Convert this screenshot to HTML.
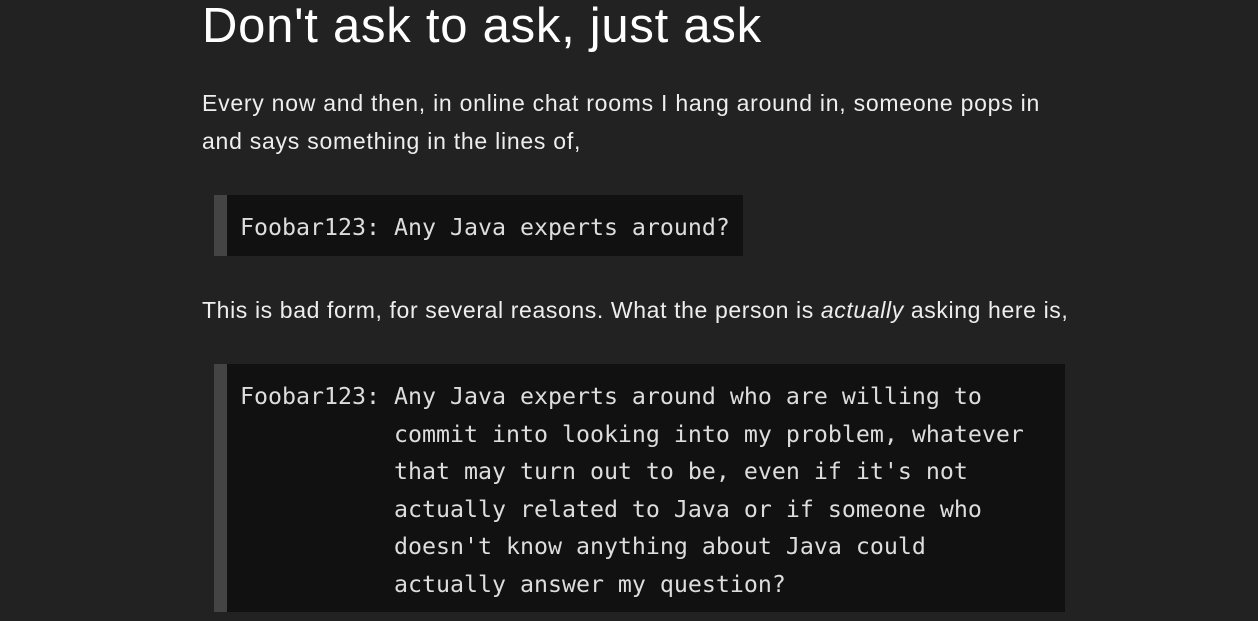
<!DOCTYPE html>
<html><head><style>
html,body{margin:0;padding:0;background:#222;width:1258px;height:621px;overflow:hidden}
body{color:#eee;font-family:"Liberation Sans",sans-serif}
h1{position:absolute;left:202px;top:-4px;margin:0;font-weight:normal;font-size:49px;line-height:60px;color:#fff;white-space:nowrap;letter-spacing:0.75px}
p{position:absolute;left:202px;margin:0;font-size:23px;line-height:38px;white-space:nowrap;color:#eee;letter-spacing:0.75px}
pre{position:absolute;margin:0;background:#111;border-left:13px solid #444;color:#ddd;font-family:"DejaVu Sans Mono","Liberation Mono",monospace;font-size:23.25px;line-height:37.6px;padding:0 10px 0 13px;box-sizing:border-box}
</style></head><body>
<h1>Don't ask to ask, just ask</h1>
<p style="top:84px">Every now and then, in online chat rooms I hang around in, someone pops in<br>and says something in the lines of,</p>
<pre style="left:214px;top:195px;width:529px;height:61px;padding-top:14px">Foobar123: Any Java experts around?</pre>
<p style="top:291px;letter-spacing:0.62px">This is bad form, for several reasons. What the person is <i>actually</i> asking here is,</p>
<pre style="left:214px;top:364px;width:851px;height:248px;padding-top:14px">Foobar123: Any Java experts around who are willing to
           commit into looking into my problem, whatever
           that may turn out to be, even if it's not
           actually related to Java or if someone who
           doesn't know anything about Java could
           actually answer my question?</pre>
</body></html>
